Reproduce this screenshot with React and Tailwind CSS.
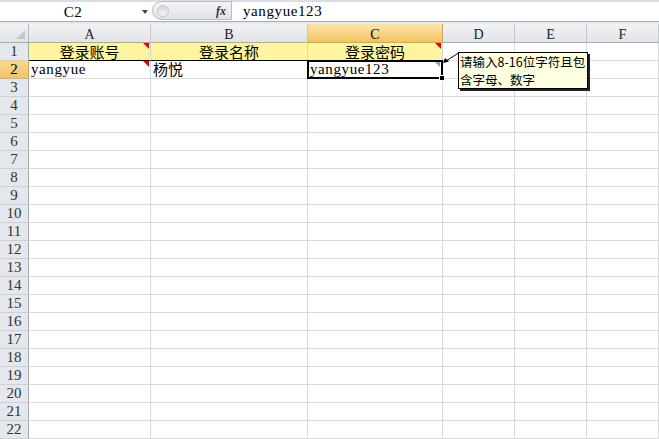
import React from "react";

const serif = "font-['Liberation_Serif','Noto_Sans_CJK_SC',serif]";
const cjk = "font-['Noto_Sans_CJK_SC',sans-serif]";

function Tri({ color }) {
  return (
    <div
      className={`absolute right-[1px] top-0 w-0 h-0 border-l-[6px] border-l-transparent border-t-[6px] ${color}`}
    />
  );
}

export default function App() {
  const rows = Array.from({ length: 22 }, (_, i) => i + 1);
  const letters = ["A", "B", "C", "D", "E", "F"];
  return (
    <div className="relative w-[659px] h-[439px] overflow-hidden bg-white text-black">
      {/* formula bar */}
      <div className="h-[22px] flex border-t-2 border-t-[#dadde1] border-b border-b-[#a9adb2] bg-white">
        <div className="w-[152px] flex items-center relative">
          <div className={`w-[146px] text-center text-[15px] leading-[18px] tracking-[0.6px] ${serif}`}>C2</div>
          <div className="absolute left-[142px] top-[8px] w-0 h-0 border-l-[3.5px] border-r-[3.5px] border-t-[4px] border-l-transparent border-r-transparent border-t-[#444]" />
        </div>
        <div className="w-[80px] h-[19px] -mt-[1px] rounded-l-[10px] border border-[#b8bcc1] bg-linear-to-b from-[#f4f5f7] to-[#dfe2e6] flex items-center justify-between pl-[4px] pr-[5px]">
          <div className="w-[12px] h-[12px] rounded-full border border-[#c3c6ca] bg-linear-to-b from-[#d6d9dd] to-[#f4f5f6]" />
          <span className="text-[12px] italic font-bold font-['Liberation_Serif',serif] text-[#333] leading-none">fx</span>
        </div>
        <div className={`flex-1 pl-[11px] text-[15px] leading-[19px] tracking-[0.6px] ${serif}`}>yangyue123</div>
      </div>
      <div className="h-[2px] bg-[#e6e9ed]" />

      {/* grid */}
      <div className="grid grid-cols-[29px_122px_157px_135px_72px_72px_72px] grid-rows-[19px_repeat(22,18px)]">
        {/* corner */}
        <div className="relative bg-linear-to-b from-[#f1f2f4] to-[#e1e4e8] border-r border-b border-r-[#b4b8bd] border-b-[#a7abb0]">
          <div className="absolute right-[3px] bottom-[3px] w-0 h-0 border-l-[9px] border-l-transparent border-b-[9px] border-b-[#c3c6cb]" />
        </div>
        {letters.map((l) =>
          l === "C" ? (
            <div
              key={l}
              className={`flex items-center justify-center pt-[2px] border-r border-b border-r-[#c7a65c] border-b-[#d9a648] bg-linear-to-b from-[#fbe4a9] to-[#f2c462] text-[14px] ${serif}`}
            >
              {l}
            </div>
          ) : (
            <div
              key={l}
              className={`flex items-center justify-center pt-[2px] border-r border-b border-r-[#c4c7cc] border-b-[#a7abb0] bg-linear-to-b from-[#f1f2f4] to-[#e1e4e8] text-[14px] text-[#222] ${serif}`}
            >
              {l}
            </div>
          )
        )}
        {rows.map((r) => (
          <React.Fragment key={r}>
            {r === 2 ? (
              <div className={`flex items-center justify-center border-r border-b border-r-[#c7a65c] border-b-[#d9b26a] bg-linear-to-b from-[#f9d892] to-[#f2c266] text-[15px] ${serif}`}>
                {r}
              </div>
            ) : (
              <div className={`flex items-center justify-center border-r border-b border-r-[#a3a7ac] border-b-[#cdd0d4] bg-[#e4e7eb] text-[15px] text-[#333] ${serif}`}>
                {r}
              </div>
            )}
            {r === 1 ? (
              <>
                <div className={`relative flex items-center justify-center bg-[#fff59e] border-r border-b border-r-[#d4d4d4] border-b-black text-[15px] leading-[17px] ${cjk}`}>
                  登录账号
                  <Tri color="border-t-[#e00000]" />
                </div>
                <div className={`relative flex items-center justify-center bg-[#fff59e] border-r border-b border-r-[#d4d4d4] border-b-black text-[15px] leading-[17px] ${cjk}`}>
                  登录名称
                </div>
                <div className={`relative flex items-center justify-center bg-[#fff59e] border-r border-b border-r-[#d4d4d4] border-b-black text-[15px] leading-[17px] ${cjk}`}>
                  登录密码
                  <Tri color="border-t-[#e00000]" />
                </div>
                <div className="border-r border-b border-[#dadada]" />
                <div className="border-r border-b border-[#dadada]" />
                <div className="border-r border-b border-[#dadada]" />
              </>
            ) : r === 2 ? (
              <>
                <div className={`relative flex items-center pl-[2px] border-r border-b border-[#dadada] text-[15px] tracking-[0.6px] ${serif}`}>
                  yangyue
                  <Tri color="border-t-[#e00000]" />
                </div>
                <div className={`flex items-center pl-[2px] border-r border-b border-[#dadada] text-[15px] ${cjk}`}>
                  杨悦
                </div>
                <div className={`relative flex items-center pl-[2px] border-r border-b border-[#dadada] text-[15px] tracking-[0.6px] ${serif}`}>
                  yangyue123
                  <div className="absolute right-[2px] top-[1px] w-0 h-0 border-l-[5px] border-l-transparent border-t-[5px] border-t-[#8fa1b3]" />
                  <div className="absolute -left-[1px] -top-[1px] -right-[1px] -bottom-[1px] border-2 border-black" />
                  <div className="absolute -right-[3px] -bottom-[3px] w-[6px] h-[6px] bg-black border border-white" />
                </div>
                <div className="border-r border-b border-[#dadada]" />
                <div className="border-r border-b border-[#dadada]" />
                <div className="border-r border-b border-[#dadada]" />
              </>
            ) : (
              <>
                <div className="border-r border-b border-[#dadada]" />
                <div className="border-r border-b border-[#dadada]" />
                <div className="border-r border-b border-[#dadada]" />
                <div className="border-r border-b border-[#dadada]" />
                <div className="border-r border-b border-[#dadada]" />
                <div className="border-r border-b border-[#dadada]" />
              </>
            )}
          </React.Fragment>
        ))}
      </div>

      {/* input message tooltip */}
      <svg className="absolute left-[440px] top-[50px]" width="20" height="16" viewBox="0 0 20 16">
        <line x1="18.5" y1="3" x2="6" y2="11" stroke="black" strokeWidth="1" />
        <polygon points="3,13 5,8 9,11.5" fill="black" />
      </svg>
      <div className={`absolute left-[458px] top-[52px] w-[130px] h-[37px] border border-black bg-[#ffffe1] shadow-[2px_2px_0_#222] pl-[1px] text-[12.5px] leading-[18px] ${cjk}`}>
        <div>请输入8-16位字符且包</div>
        <div>含字母、数字</div>
      </div>
    </div>
  );
}
